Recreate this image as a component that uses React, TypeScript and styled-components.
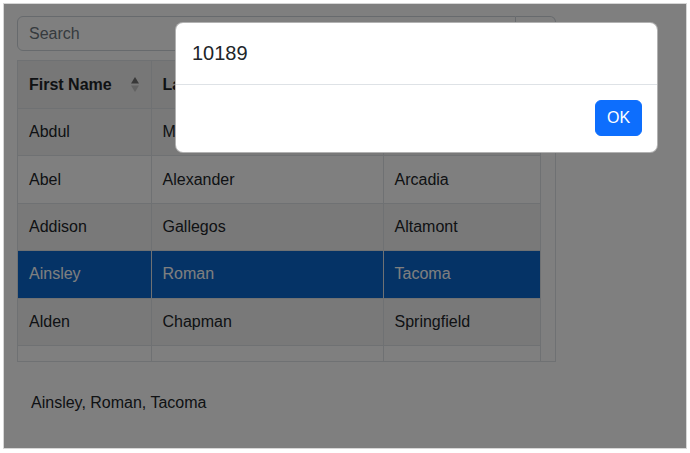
import styled, { createGlobalStyle } from "styled-components";
import { Search } from "lucide-react";

type Person = { first: string; last: string; city: string };

const people: Person[] = [
    { first: "Abdul", last: "Mccoy", city: "Riverside" },
    { first: "Abel", last: "Alexander", city: "Arcadia" },
    { first: "Addison", last: "Gallegos", city: "Altamont" },
    { first: "Ainsley", last: "Roman", city: "Tacoma" },
    { first: "Alden", last: "Chapman", city: "Springfield" },
];

const selected = 3;

const SortIcon = () => (
    <svg width="8" height="15" viewBox="0 0 8 15">
        <path d="M4 0 L8 6.5 L0 6.5 Z" fill="#707070" />
        <path d="M4 15 L8 8.5 L0 8.5 Z" fill="#c4c4c4" />
    </svg>
);

const App = () => {
    const current = people[selected];

    return (
        <>
            <GlobalStyle />
            <Frame>
                <SearchGroup>
                    <SearchInput placeholder="Search" />
                    <SearchButton>
                        <Search size={16} />
                    </SearchButton>
                </SearchGroup>

                <TableWrap>
                    <TableArea>
                        <Table>
                            <colgroup>
                                <col style={{ width: 133 }} />
                                <col style={{ width: 232 }} />
                                <col />
                            </colgroup>
                            <thead>
                                <tr>
                                    {["First Name", "Last Name", "City"].map((h) => (
                                        <Th key={h}>
                                            <HeadInner>
                                                {h}
                                                <SortIcon />
                                            </HeadInner>
                                        </Th>
                                    ))}
                                </tr>
                            </thead>
                            <tbody>
                                {people.map((p, i) => (
                                    <Row key={p.first} $striped={i % 2 === 0} $active={i === selected}>
                                        <Td>{p.first}</Td>
                                        <Td>{p.last}</Td>
                                        <Td>{p.city}</Td>
                                    </Row>
                                ))}
                                {/* next row, scrolled out of view */}
                                <Row $striped={false} $active={false}>
                                    <Td />
                                    <Td />
                                    <Td />
                                </Row>
                            </tbody>
                        </Table>
                    </TableArea>
                    <ScrollGutter />
                </TableWrap>

                <Summary>
                    {current.first}, {current.last}, {current.city}
                </Summary>

                <Backdrop />

                <Dialog>
                    <DialogBody>10189</DialogBody>
                    <DialogFooter>
                        <OkButton>OK</OkButton>
                    </DialogFooter>
                </Dialog>
            </Frame>
        </>
    );
};

export default App;

const GlobalStyle = createGlobalStyle`
    * {
        box-sizing: border-box;
    }

    body {
        margin: 0;
        background: #ffffff;
        font-family: "Liberation Sans", Arial, sans-serif;
        color: #212529;
    }
`;

const Frame = styled.div`
    position: relative;
    margin: 3px;
    width: 684px;
    height: 446px;
    border: 1px solid #d6d6d6;
    background: #ffffff;
    padding: 12px 13px;
    overflow: hidden;
`;

const SearchGroup = styled.div`
    display: flex;
    width: 539px;
    height: 35px;
`;

const SearchInput = styled.input`
    flex: 1;
    min-width: 0;
    border: 1px solid #ced4da;
    border-radius: 6px 0 0 6px;
    padding: 0 11px;
    font-family: inherit;
    font-size: 16px;
    color: #212529;
    background: #ffffff;

    &::placeholder {
        color: #6c757d;
    }
`;

const SearchButton = styled.button`
    width: 40px;
    border: 1px solid #ced4da;
    border-left: none;
    border-radius: 0 6px 6px 0;
    background: #ffffff;
    color: #6c757d;
    display: flex;
    align-items: center;
    justify-content: center;
    padding: 0;
`;

const TableWrap = styled.div`
    display: flex;
    margin-top: 9px;
    width: 539px;
    height: 302px;
    border: 1px solid #dee2e6;
`;

const TableArea = styled.div`
    flex: 1;
    overflow: hidden;
`;

const ScrollGutter = styled.div`
    width: 15px;
    border-left: 1px solid #dee2e6;
    background: #ffffff;
`;

const Table = styled.table`
    width: 100%;
    table-layout: fixed;
    border-collapse: collapse;
    font-size: 16px;
`;

const Th = styled.th`
    background: #eeeeee;
    border-right: 1px solid #dee2e6;
    border-bottom: 1px solid #dee2e6;
    padding: 11.5px 12px 11.5px 11px;
    line-height: 24px;
    text-align: left;
    font-weight: 700;
    color: #212529;

    &:last-child {
        border-right: none;
    }
`;

const HeadInner = styled.div`
    display: flex;
    align-items: center;
    justify-content: space-between;
`;

const Row = styled.tr<{ $striped: boolean; $active: boolean }>`
    background: ${({ $active, $striped }) => ($active ? "#0a66cc" : $striped ? "#f3f3f3" : "#ffffff")};
    color: ${({ $active }) => ($active ? "#ffffff" : "#212529")};
`;

const Td = styled.td`
    height: 47.4px;
    border-right: 1px solid #dee2e6;
    border-bottom: 1px solid #dee2e6;
    padding: 0 12px 0 11px;
    line-height: 24px;
    white-space: nowrap;
    overflow: hidden;

    &:last-child {
        border-right: none;
    }
`;

const Summary = styled.div`
    padding: 29px 14px 0;
    font-size: 16px;
    line-height: 24px;
    color: #212529;
`;

const Backdrop = styled.div`
    position: absolute;
    inset: 0;
    background: rgba(0, 0, 0, 0.5);
`;

const Dialog = styled.div`
    position: absolute;
    left: 171px;
    top: 18px;
    width: 483px;
    background: #ffffff;
    border: 1px solid rgba(0, 0, 0, 0.3);
    border-radius: 8px;
    overflow: hidden;
`;

const DialogBody = styled.div`
    padding: 15px 16px 16px;
    font-size: 20px;
    line-height: 30px;
    color: #212529;
    border-bottom: 1px solid #dee2e6;
`;

const DialogFooter = styled.div`
    display: flex;
    justify-content: flex-end;
    padding: 15px 15px 16px;
`;

const OkButton = styled.button`
    width: 47px;
    height: 36px;
    border: 1px solid #0d6efd;
    border-radius: 6px;
    background: #0d6efd;
    color: #ffffff;
    font-family: inherit;
    font-size: 16px;
    padding: 0;
`;
